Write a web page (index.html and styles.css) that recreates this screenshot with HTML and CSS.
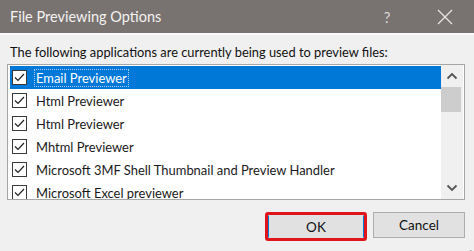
FILE: index.html
```html
<!DOCTYPE html>
<html>
<head>
<meta charset="utf-8">
<link rel="stylesheet" href="styles.css">
</head>
<body>
<div class="dialog">
  <div class="titlebar">
    <span class="title">File Previewing Options</span>
    <span class="help">?</span>
    <span class="close"><svg width="16" height="16" viewBox="0 0 16 16"><path d="M1 1L15 15M15 1L1 15" stroke="#e8e6e5" stroke-width="1.3" fill="none"/></svg></span>
  </div>
  <div class="body">
    <div class="label">The following applications are currently being used to preview files:</div>
    <div class="listbox">
      <div class="rows">
        <div class="row selected"><span class="cb"><svg width="13" height="13" viewBox="0 0 13 13"><path d="M2 6.5L5 9.5L11 3" stroke="#222" stroke-width="1.2" fill="none"/></svg></span><span class="name focus">Email Previewer</span></div>
        <div class="row"><span class="cb"><svg width="13" height="13" viewBox="0 0 13 13"><path d="M2 6.5L5 9.5L11 3" stroke="#222" stroke-width="1.2" fill="none"/></svg></span><span class="name">Html Previewer</span></div>
        <div class="row"><span class="cb"><svg width="13" height="13" viewBox="0 0 13 13"><path d="M2 6.5L5 9.5L11 3" stroke="#222" stroke-width="1.2" fill="none"/></svg></span><span class="name">Html Previewer</span></div>
        <div class="row"><span class="cb"><svg width="13" height="13" viewBox="0 0 13 13"><path d="M2 6.5L5 9.5L11 3" stroke="#222" stroke-width="1.2" fill="none"/></svg></span><span class="name">Mhtml Previewer</span></div>
        <div class="row"><span class="cb"><svg width="13" height="13" viewBox="0 0 13 13"><path d="M2 6.5L5 9.5L11 3" stroke="#222" stroke-width="1.2" fill="none"/></svg></span><span class="name">Microsoft 3MF Shell Thumbnail and Preview Handler</span></div>
        <div class="row"><span class="cb"><svg width="13" height="13" viewBox="0 0 13 13"><path d="M2 6.5L5 9.5L11 3" stroke="#222" stroke-width="1.2" fill="none"/></svg></span><span class="name">Microsoft Excel previewer</span></div>
      </div>
      <div class="scrollbar">
        <div class="arrow"><svg width="12" height="8" viewBox="0 0 12 8"><path d="M1.5 6.5L6 2L10.5 6.5" stroke="#555" stroke-width="1.8" fill="none"/></svg></div>
        <div class="thumb"></div>
        <div class="track"></div>
        <div class="arrow"><svg width="12" height="8" viewBox="0 0 12 8"><path d="M1.5 1.5L6 6L10.5 1.5" stroke="#555" stroke-width="1.8" fill="none"/></svg></div>
      </div>
    </div>
    <div class="buttons">
      <div class="ok-ring"><button class="btn ok">OK</button></div>
      <button class="btn cancel">Cancel</button>
    </div>
  </div>
  <div class="grip"><svg width="8" height="8" viewBox="0 0 8 8"><g fill="#a0a0a0"><rect x="6" y="0" width="1.5" height="1.5"/><rect x="3" y="3" width="1.5" height="1.5"/><rect x="6" y="3" width="1.5" height="1.5"/><rect x="0" y="6" width="1.5" height="1.5"/><rect x="3" y="6" width="1.5" height="1.5"/><rect x="6" y="6" width="1.5" height="1.5"/></g></svg></div>
</div>
</body>
</html>
```
FILE: styles.css
```css
* { box-sizing: border-box; }
html, body { margin: 0; padding: 0; }
body {
  width: 474px;
  height: 251px;
  overflow: hidden;
  font-family: Lato, "Noto Sans", sans-serif;
  background: #f0f0f0;
}
.dialog {
  position: relative;
  width: 474px;
  height: 251px;
  overflow: hidden;
  display: flex;
  flex-direction: column;
}
.titlebar {
  height: 35px;
  flex: none;
  background: #787270;
  display: flex;
  align-items: center;
  padding-left: 10px;
  color: #f4f2f1;
  border-bottom: 2px solid #fafafa;
}
.title {
  font-size: 14.5px;
  flex: 1;
}
.help {
  font-size: 15px;
  width: 20px;
  margin-right: 40px;
  text-align: center;
  color: #dcd8d6;
}
.close {
  width: 16px;
  height: 16px;
  margin-right: 21px;
  display: flex;
}
.body {
  flex: 1;
  display: flex;
  flex-direction: column;
  padding: 8px 9px 0 7px;
}
.label {
  font-size: 12.85px;
  color: #111;
  padding-left: 3px;
  height: 21px;
  line-height: 19px;
}
.listbox {
  height: 136px;
  flex: none;
  border: 1px solid #a6a6a6;
  background: #fff;
  display: flex;
}
.rows {
  flex: 1;
  display: flex;
  flex-direction: column;
  padding: 1px 0 0 2px;
  overflow: hidden;
}
.row {
  height: 23px;
  flex: none;
  display: flex;
  align-items: center;
  font-size: 12.95px;
  color: #1a1a1a;
  white-space: nowrap;
}
.row:last-child { align-items: flex-start; padding-top: 4px; }
.row.selected {
  background: #0078d7;
  color: #fff;
}
.cb {
  width: 15px;
  height: 15px;
  border: 1px solid #3a3a3a;
  background: #fff;
  margin-left: 2px;
  margin-right: 8px;
  display: flex;
  align-items: center;
  justify-content: center;
  flex: none;
}
.name {
  padding: 0 1px;
}
.name.focus {
  outline: 1px dotted #a8cdf0;
}
.scrollbar {
  width: 22px;
  background: #f0f0f0;
  display: flex;
  flex-direction: column;
  margin-right: 1px;
}
.arrow {
  height: 22px;
  display: flex;
  align-items: center;
  justify-content: center;
}
.thumb {
  height: 25px;
  background: #cdcdcd;
  margin: 0 2px 0 0;
}
.track { flex: 1; }
.buttons {
  display: flex;
  justify-content: flex-end;
  gap: 6px;
  margin-top: 12px;
}
.ok-ring {
  border: 3px solid #e0141b;
  border-radius: 3px;
  padding: 0;
  display: flex;
}
.btn {
  font-family: inherit;
  font-size: 13.5px;
  color: #111;
  background: #e1e1e1;
  border: 1px solid #adadad;
  height: 26px;
  padding: 0;
  margin: 0;
}
.ok {
  width: 96px;
  height: 23px;
  border-color: #0078d7;
  border-top-color: #e1e1e1;
  border-bottom-color: #e1e1e1;
}
.cancel {
  width: 92px;
}
.grip {
  position: absolute;
  right: 2px;
  bottom: 1px;
  width: 8px;
  height: 8px;
}
```
